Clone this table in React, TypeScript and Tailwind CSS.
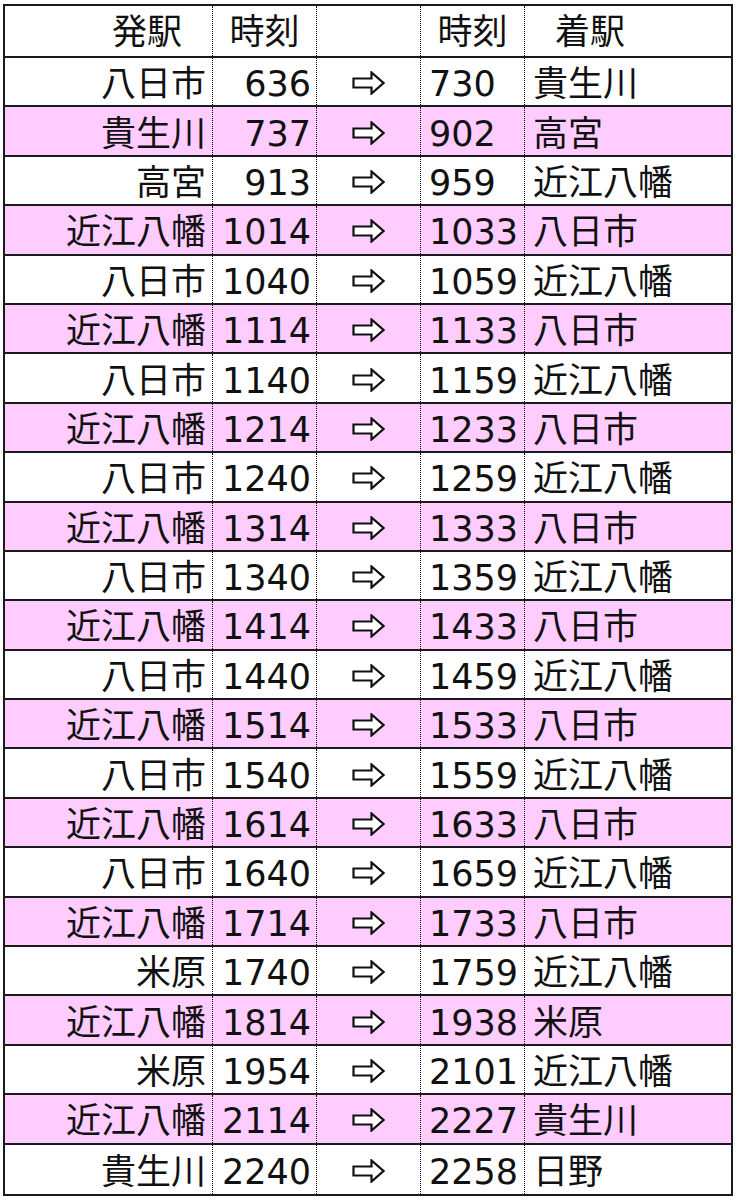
import React from 'react';

const rows: [string, string, string, string][] = [
    ['八日市', '636', '730', '貴生川'],
    ['貴生川', '737', '902', '高宮'],
    ['高宮', '913', '959', '近江八幡'],
    ['近江八幡', '1014', '1033', '八日市'],
    ['八日市', '1040', '1059', '近江八幡'],
    ['近江八幡', '1114', '1133', '八日市'],
    ['八日市', '1140', '1159', '近江八幡'],
    ['近江八幡', '1214', '1233', '八日市'],
    ['八日市', '1240', '1259', '近江八幡'],
    ['近江八幡', '1314', '1333', '八日市'],
    ['八日市', '1340', '1359', '近江八幡'],
    ['近江八幡', '1414', '1433', '八日市'],
    ['八日市', '1440', '1459', '近江八幡'],
    ['近江八幡', '1514', '1533', '八日市'],
    ['八日市', '1540', '1559', '近江八幡'],
    ['近江八幡', '1614', '1633', '八日市'],
    ['八日市', '1640', '1659', '近江八幡'],
    ['近江八幡', '1714', '1733', '八日市'],
    ['米原', '1740', '1759', '近江八幡'],
    ['近江八幡', '1814', '1938', '米原'],
    ['米原', '1954', '2101', '近江八幡'],
    ['近江八幡', '2114', '2227', '貴生川'],
    ['貴生川', '2240', '2258', '日野'],
];

function Arrow() {
    return (
        <svg width="33" height="24" viewBox="0 0 33 24" fill="none">
            <path
                d="M1.5 7.5 H19.5 V1.5 L31.5 12 L19.5 22.5 V16.5 H1.5 Z"
                stroke="#111"
                strokeWidth="2.2"
                strokeLinejoin="miter"
                fill="white"
            />
        </svg>
    );
}

export default function App() {
    return (
        <div className="w-[738px] h-[1200px] bg-white pl-[3px] pt-[4px]">
            <div
                className="w-[730px] border-2 border-[#1a1a1a] text-[35px] leading-none text-[#111]"
                style={{ fontFamily: '"DejaVu Sans", "Noto Sans CJK JP", sans-serif' }}
            >
                {/* header */}
                <div className="grid grid-cols-[208px_104px_104px_104px_206px] h-[52px] border-b-2 border-[#1a1a1a]">
                    <div className="flex items-center justify-end pr-[30px] pt-[2px] border-r border-dotted border-black">発駅</div>
                    <div className="flex items-center justify-center pt-[2px] border-r border-dotted border-black">時刻</div>
                    <div className="border-r border-dotted border-black" />
                    <div className="flex items-center justify-center pt-[2px] border-r border-dotted border-black">時刻</div>
                    <div className="flex items-center pl-[30px] pt-[2px]">着駅</div>
                </div>
                {rows.map((r, i) => (
                    <div
                        key={i}
                        className={`grid grid-cols-[208px_104px_104px_104px_206px] h-[49.4px] ${i < rows.length - 1 ? 'border-b-2 border-[#1a1a1a]' : ''} ${i % 2 === 1 ? 'bg-[#ffccff]' : 'bg-white'}`}
                    >
                        <div className="flex items-center justify-end pr-[6px] pt-[6px] border-r border-dotted border-black">{r[0]}</div>
                        <div className="flex items-center justify-end pr-[5px] pt-[6px] border-r border-dotted border-black">{r[1]}</div>
                        <div className="flex items-center justify-center pt-[3px] border-r border-dotted border-black">
                            <Arrow />
                        </div>
                        <div className="flex items-center pl-[8px] pt-[6px] border-r border-dotted border-black">{r[2]}</div>
                        <div className="flex items-center pl-[8px] pt-[6px]">{r[3]}</div>
                    </div>
                ))}
            </div>
        </div>
    );
}
